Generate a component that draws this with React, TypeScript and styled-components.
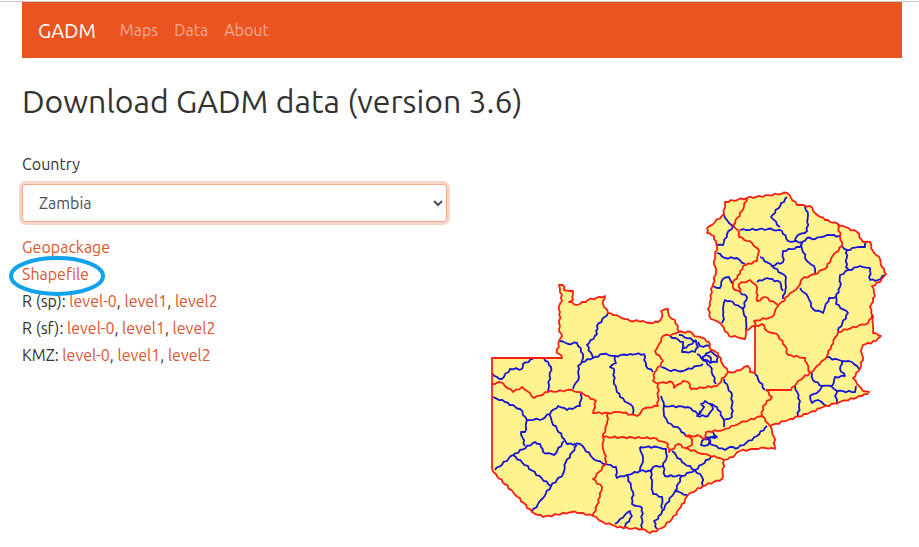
import React from "react";
import styled, { createGlobalStyle } from "styled-components";

const GlobalStyle = createGlobalStyle`
  *, *::before, *::after { box-sizing: border-box; }
  body {
    margin: 0;
    background: #fff;
    color: #333;
    font-family: Ubuntu, "Noto Sans", "Open Sans", sans-serif;
    font-size: 16px;
    line-height: 27px;
  }
`;

const Page = styled.div`
  border-top: 1px solid #c8c8c8;
  margin-top: 1px;
`;

const Container = styled.div`
  padding: 0 17px 0 22px;
`;

const Navbar = styled.nav`
  display: flex;
  align-items: center;
  gap: 24px;
  height: 56px;
  padding: 0 16px;
  background: #e95420;
`;

const Brand = styled.a`
  color: #fff;
  font-size: 20px;
  text-decoration: none;
`;

const NavList = styled.ul`
  display: flex;
  gap: 16px;
  margin: 0;
  padding: 0;
  list-style: none;
`;

const NavLink = styled.a`
  color: rgba(255, 255, 255, 0.5);
  text-decoration: none;
`;

const Title = styled.h1`
  margin: 24px 0 30px;
  font-size: 32px;
  font-weight: 400;
  line-height: 39px;
`;

const Columns = styled.div`
  display: grid;
  grid-template-columns: 1fr 1fr;
  gap: 30px;
  align-items: start;
`;

const Label = styled.label`
  display: block;
  margin-bottom: 6px;
`;

const CountrySelect = styled.select`
  display: block;
  width: 100%;
  height: 38px;
  margin-bottom: 12px;
  padding: 0 0 0 12px;
  border: 1px solid #f0a88f;
  border-radius: 4px;
  outline: none;
  background: #fff;
  box-shadow: 0 0 0 3px #f9d4c8;
  color: #495057;
  font: inherit;
`;

const Downloads = styled.ul`
  margin: 0;
  padding: 0;
  list-style: none;
`;

const Link = styled.a`
  color: #dc5530;
  text-decoration: none;
`;

const Circled = styled.span`
  position: relative;
`;

const Ring = styled.svg`
  position: absolute;
  top: -10px;
  left: -13px;
  width: 96px;
  height: 42px;
  pointer-events: none;
`;

const MapDrawing = styled.svg`
  display: block;
  width: 100%;
`;

const parse = (line: string) => line.split(" ").map((p) => p.split(",").map(Number));

/* Breaks each long segment into short uneven steps, as on a surveyed border. */
const rough = (line: string) => {
  const pts = parse(line);
  let d = `M${pts[0]}`;
  for (let i = 1; i < pts.length; i++) {
    const [x0, y0] = pts[i - 1];
    const [x1, y1] = pts[i];
    const len = Math.hypot(x1 - x0, y1 - y0);
    const straight = len > 24 && (x0 === x1 || y0 === y1);
    const steps = straight ? 1 : Math.max(1, Math.round(len / 3));
    for (let s = 1; s < steps; s++) {
      const t = s / steps;
      const j = Math.sin(x0 * 12.9 + y0 * 78.2 + s * 2.3) * 0.9;
      const x = x0 + (x1 - x0) * t - ((y1 - y0) / len) * j;
      const y = y0 + (y1 - y0) * t + ((x1 - x0) / len) * j;
      d += `L${x.toFixed(1)},${y.toFixed(1)}`;
    }
    d += `L${x1},${y1}`;
  }
  return d;
};

const outline =
  "492,359 562,359 561,356 557,354 559,342 562,337 559,330 560,313 559,307 562,302 560,290 559,286 563,286 564,291 573,292 573,301 569,303 577,306 588,301 605,297 603,305 608,314 613,316 620,318 630,322 643,322 650,324 658,323 662,318 661,312 668,310 669,317 675,321 679,333 691,333 694,337 702,339 709,343 711,351 718,354 721,362 728,373 735,373 742,370 748,367 750,373 755,374 755,327 746,331 745,340 737,338 729,337 720,324 711,320 708,310 711,300 711,290 713,285 716,273 714,262 717,248 714,237 707,234 707,229 715,223 724,215 725,203 747,199 787,194 797,206 810,207 815,214 825,221 838,225 845,228 857,233 863,243 870,243 873,252 880,260 882,268 886,275 880,283 872,287 875,297 870,308 873,317 873,327 873,334 881,337 876,342 863,346 861,352 863,358 860,370 853,379 857,385 863,392 869,393 862,397 840,403 823,408 807,415 790,420 770,427 774,438 775,450 765,449 755,450 740,452 735,456 728,460 724,461 722,480 703,487 688,496 681,508 672,520 662,529 650,534 642,530 623,529 615,527 603,523 593,517 583,514 572,513 543,518 532,513 513,493 497,477 492,470 492,359";

const provinces = [
  "492,385 500,383 513,393 522,388 530,394 534,399 548,393 572,391 583,395 596,402 593,414 608,414 607,425 603,438 603,450 606,457 605,466 593,480 602,488 600,498 593,517",
  "608,414 620,413 637,417 645,409 658,407 658,385 653,382 655,373 663,362 655,352 659,345 663,337 673,335 679,333",
  "658,384 672,383 674,389 683,382 688,383 691,390 717,387 728,373",
  "603,438 653,439 668,445 669,453 678,445 685,449 703,455 720,459 724,461",
  "686,449 692,446 692,440 686,437 700,437 705,440 706,433 723,431 740,424 762,417 770,427",
  "762,417 763,407 772,398 766,391",
  "766,391 791,391 798,382 810,374 820,365 827,357 831,347 838,333 868,324 872,316",
  "755,327 762,325 767,332 777,335 785,347 788,356 805,359 810,374",
  "755,327 754,322 772,318 778,307 788,297 798,288 802,280 815,275 827,268 832,258 842,247 838,225",
  "747,199 742,212 733,226 739,232 739,238 752,244 759,252 757,262 743,267 740,275 733,283 733,289 740,293 739,285 750,281 757,288 757,302 765,298 778,306",
];

const districts = [
  "492,374 497,378 502,380 510,370 522,370 523,365 533,360",
  "544,359 551,368 548,392",
  "560,342 568,345 577,344 583,355 582,362 578,367 579,378 573,390",
  "608,314 597,327 597,335 587,346 593,359 582,363",
  "593,359 603,355 615,357 630,355 644,355 646,367 653,373",
  "615,357 616,364 610,368 614,370 614,385 620,398 633,408 633,415",
  "661,368 668,371 683,372 703,365",
  "670,337 683,343 682,353 695,353 698,348 696,342 679,336",
  "683,349 692,345 696,341",
  "698,343 700,347 710,347",
  "697,355 710,367 716,385",
  "702,358 711,352 718,358 717,363 710,364 702,358",
  "706,356 711,359 712,364",
  "724,380 732,397 732,418 724,421 724,428",
  "661,397 664,407 688,408 693,412 700,415 704,408 701,405 705,402 710,405 717,408 724,421",
  "710,405 713,410 708,417 697,417 700,412",
  "664,407 664,417 668,424 680,430 686,437",
  "705,438 717,438 713,433",
  "717,438 709,439 708,446 701,446 702,442 709,439 710,445 725,451 730,448 738,449 757,437 767,427",
  "640,448 657,448 666,450 667,457 663,467 665,477 682,477 695,471 711,458",
  "640,448 643,460 640,472 627,476 617,479 616,468 605,465",
  "640,472 651,472 653,468 663,467",
  "651,470 652,487 653,495 662,498 662,510",
  "682,477 675,492 662,512 658,520 654,522 657,530",
  "675,492 687,496",
  "672,452 682,463 695,471 702,478 703,487",
  "627,476 633,493 632,505 642,509 642,529",
  "615,525 620,520 630,512 632,517 623,530",
  "493,398 505,403 520,410 527,421 543,420 558,407 567,411 580,407 582,393",
  "527,421 525,433 521,433 525,447",
  "495,471 513,456 535,443 540,445 543,453 554,456 564,442",
  "549,415 552,423 564,440 567,445 580,445 595,461 606,465",
  "513,456 551,487 563,475 566,463 577,446",
  "551,487 542,500 532,513",
  "755,375 765,391",
  "795,387 800,402 798,417",
  "812,374 813,381 822,387 831,387 837,392 855,393 856,387",
  "822,387 819,392 810,397 812,404 818,401 826,407",
  "837,392 835,397 837,404",
  "832,387 835,378 845,377 840,370 842,362",
  "826,358 842,362 852,363 859,370",
  "805,207 808,217 807,232 797,237 795,243",
  "740,231 768,230 782,232 788,242 802,243 807,239 815,240 827,236 840,237",
  "787,198 771,218 780,228",
  "802,243 802,250 807,262 814,267 815,274",
  "760,258 772,267 783,263 783,252 800,248 802,243",
  "772,267 786,278 786,288 783,300",
  "757,283 767,279 780,283 783,292",
  "717,254 725,259 737,259 745,265",
  "724,216 729,224 733,228 727,235 723,246 717,246",
  "713,287 720,289 723,280 729,278 733,285",
  "740,293 747,298 743,310 730,302 725,301 723,310 724,320 722,324",
  "743,310 746,322 746,331",
  "842,247 847,251 858,248 865,248 866,243",
  "847,251 846,268 849,271 860,267 870,269 870,281 878,281 885,276",
  "849,271 840,276 840,288 836,298 829,299 825,308 823,314 813,310 808,298 800,289",
  "836,298 836,305 848,314 838,332",
];

const levels = ["level-0", "level1", "level2"];
const formats = ["R (sp)", "R (sf)", "KMZ"];

function ZambiaMap() {
  return (
    <MapDrawing viewBox="477 152 425 388" role="img" aria-label="Map of Zambia">
      <path d={rough(outline) + "Z"} fill="#fff38f" />
      <g fill="none" strokeWidth="1.8" strokeLinejoin="round">
        <g stroke="#1414d2">
          {districts.map((line) => (
            <path key={line} d={rough(line)} />
          ))}
        </g>
        <g stroke="#fa1e14">
          {provinces.map((line) => (
            <path key={line} d={rough(line)} />
          ))}
          <path d={rough(outline) + "Z"} />
        </g>
      </g>
    </MapDrawing>
  );
}

export default function App() {
  return (
    <Page>
      <GlobalStyle />
      <Container>
        <Navbar>
          <Brand href="#">GADM</Brand>
          <NavList>
            {["Maps", "Data", "About"].map((name) => (
              <li key={name}>
                <NavLink href="#">{name}</NavLink>
              </li>
            ))}
          </NavList>
        </Navbar>
        <Title>Download GADM data (version 3.6)</Title>
        <Columns>
          <div>
            <Label htmlFor="country">Country</Label>
            <CountrySelect id="country" defaultValue="Zambia">
              <option>Zambia</option>
            </CountrySelect>
            <Downloads>
              <li>
                <Link href="#">Geopackage</Link>
              </li>
              <li>
                <Circled>
                  <Link href="#">Shapefile</Link>
                  <Ring viewBox="0 0 96 42" aria-hidden="true">
                    <ellipse cx="48" cy="21" rx="46" ry="18" fill="none" stroke="#10a2ea" strokeWidth="4" />
                  </Ring>
                </Circled>
              </li>
              {formats.map((format) => (
                <li key={format}>
                  {format}:{" "}
                  {levels.map((level, i) => (
                    <React.Fragment key={level}>
                      {i > 0 && ", "}
                      <Link href="#">{level}</Link>
                    </React.Fragment>
                  ))}
                </li>
              ))}
            </Downloads>
          </div>
          <ZambiaMap />
        </Columns>
      </Container>
    </Page>
  );
}
